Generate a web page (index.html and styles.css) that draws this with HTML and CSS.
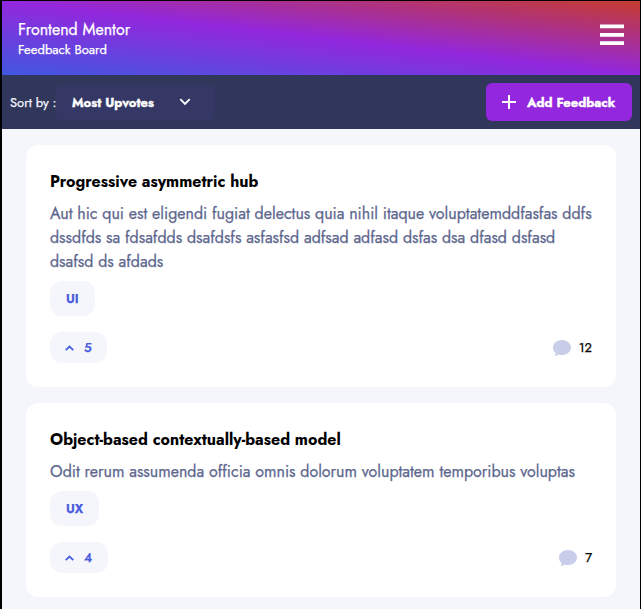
FILE: index.html
```html
<!DOCTYPE html>
<html lang="en">
<head>
<meta charset="utf-8">
<title>Feedback Board</title>
<link rel="stylesheet" href="styles.css">
</head>
<body>
<div class="app">
  <header class="header">
    <div class="brand">
      <h1 class="brand-name">Frontend Mentor</h1>
      <p class="brand-sub">Feedback Board</p>
    </div>
    <svg class="menu" width="24" height="22" viewBox="0 0 24 22" fill="#fff"><path d="M0 .5h24v3.700H0zM0 9h24v3.700H0zM0 17.300h24V21H0z"/></svg>
  </header>
  <div class="toolbar">
    <span class="sort-label">Sort by :</span>
    <div class="select">
      <span class="select-value">Most Upvotes</span>
      <svg width="12" height="8" viewBox="0 0 12 8" fill="none" stroke="#fff" stroke-width="1.900"><path d="M1.300 1.200 6 5.900l4.700-4.700"/></svg>
    </div>
    <button class="add">
      <svg width="14" height="14" viewBox="0 0 14 14" fill="none" stroke="#fff" stroke-width="2"><path d="M7 0v14M0 7h14"/></svg>
      <span class="add-text">Add Feedback</span>
    </button>
  </div>
  <main class="list">
    <article class="card">
      <h2 class="title">Progressive asymmetric hub</h2>
      <p class="desc">Aut hic qui est eligendi fugiat delectus quia nihil itaque voluptatemddfasfas ddfs dssdfds sa fdsafdds dsafdsfs asfasfsd adfsad adfasd dsfas dsa dfasd dsfasd dsafsd ds afdads</p>
      <span class="tag tag-ui">UI</span>
      <div class="foot">
        <div class="votes votes-a"><svg width="9" height="6" viewBox="0 0 9 6" fill="none" stroke="#4661e6" stroke-width="1.800"><path d="M.7 5.200 4.500 1.500l3.800 3.700"/></svg><span>5</span></div>
        <div class="comments"><svg width="18" height="16" viewBox="0 0 18 16" fill="#c8cdea"><path d="M9 0c5 0 9 3.300 9 7.500S14 15 9 15c-1.400 0-2.700-.2-3.800-.6C4.200 15.400 3 16 1.600 16c.8-.8 1.200-1.700 1.200-2.800C1 11.800 0 9.800 0 7.500 0 3.300 4 0 9 0z"/></svg><span>12</span></div>
      </div>
    </article>
    <article class="card">
      <h2 class="title">Object-based contextually-based model</h2>
      <p class="desc">Odit rerum assumenda officia omnis dolorum voluptatem temporibus voluptas</p>
      <span class="tag tag-ux">UX</span>
      <div class="foot">
        <div class="votes votes-b"><svg width="9" height="6" viewBox="0 0 9 6" fill="none" stroke="#4661e6" stroke-width="1.800"><path d="M.7 5.200 4.500 1.500l3.800 3.700"/></svg><span>4</span></div>
        <div class="comments"><svg width="18" height="16" viewBox="0 0 18 16" fill="#c8cdea"><path d="M9 0c5 0 9 3.300 9 7.500S14 15 9 15c-1.400 0-2.700-.2-3.800-.6C4.200 15.400 3 16 1.600 16c.8-.8 1.200-1.700 1.200-2.800C1 11.800 0 9.800 0 7.500 0 3.300 4 0 9 0z"/></svg><span>7</span></div>
      </div>
    </article>
  </main>
</div>
</body>
</html>
```
FILE: styles.css
```css
* { box-sizing: border-box; margin: 0; padding: 0; }
body {
  height: 609px;
  overflow: hidden;
  background: #000;
  font-family: Jost, Lato, sans-serif;
  -webkit-text-stroke-width: .25px;
}
svg { display: block; flex: none; }
.app {
  height: 609px;
  border: solid #000;
  border-width: 1px 1px 0 2px;
  background: #f5f6fc;
}
.header {
  height: 74px;
  padding: 17px 16px 0;
  display: flex;
  justify-content: space-between;
  color: #fff;
  background: linear-gradient(to top right, #4158df, #9327dd 50%, #c63c2d);
}
.menu { margin-top: 6px; }
.brand-name { font-size: 16px; line-height: 24px; font-weight: 400; white-space: nowrap; }
.brand-sub { font-size: 13px; line-height: 16px; font-weight: 400; white-space: nowrap; }
.toolbar {
  height: 54px;
  padding: 0 8px;
  display: flex;
  align-items: center;
  color: #fff;
  background: #31375a;
}
.sort-label { width: 46px; font-size: 13px; color: #f2f4fe; white-space: nowrap; }
.select {
  width: 159px;
  height: 35px;
  padding: 0 24px 0 16px;
  display: flex;
  align-items: center;
  justify-content: space-between;
  border-radius: 6px;
  background: #353864;
}
.select-value, .add-text { font-size: 13px; font-weight: 700; white-space: nowrap; -webkit-text-stroke-width: .35px; }
.add {
  width: 146px;
  height: 38px;
  margin-left: auto;
  padding: 0 16px;
  display: flex;
  align-items: center;
  gap: 11px;
  border: 0;
  border-radius: 6px;
  color: #fff;
  background: #9327dd;
  font-family: inherit;
}
.list {
  padding: 16px 24px;
  display: flex;
  flex-direction: column;
  gap: 16px;
}
.card {
  padding: 25px 24px 24px;
  border-radius: 12px;
  background: #fff;
}
.title { font-size: 16px; line-height: 24px; font-weight: 700; color: #000; -webkit-text-stroke-width: 0; }
.desc { margin: 8px 0 7px; font-size: 16px; line-height: 24px; color: #5d678e; }
.tag {
  display: flex;
  align-items: center;
  height: 35px;
  padding-left: 16px;
  border-radius: 12px;
  background: #f5f6fc;
  color: #4459dc;
  font-size: 13px;
  font-weight: 600;
}
.tag-ui { width: 45px; }
.tag-ux { width: 49px; }
.foot {
  height: 31px;
  margin-top: 16px;
  display: flex;
  align-items: center;
  justify-content: space-between;
  font-size: 13px;
}
.votes {
  height: 31px;
  padding-left: 15px;
  display: flex;
  align-items: center;
  gap: 10px;
  border-radius: 12px;
  background: #f5f6fc;
  color: #4459dc;
  font-weight: 500;
}
.votes-a { width: 57px; }
.votes-b { width: 58px; }
.comments { display: flex; align-items: center; gap: 8px; color: #000; }
```
